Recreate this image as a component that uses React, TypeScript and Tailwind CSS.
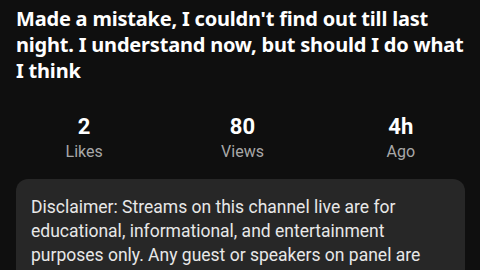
export default function App() {
  const stats = [
    { value: '2', label: 'Likes' },
    { value: '80', label: 'Views' },
    { value: '4h', label: 'Ago' },
  ];

  return (
    <div className="w-[480px] h-[270px] overflow-hidden bg-[#0f0f0f]">
      {/* Title */}
      <h1 className="pl-4 pr-3 pt-[6px] text-[20px] leading-[26px] font-bold text-white font-['Noto_Sans',sans-serif] tracking-[-0.2px]">
        Made a mistake, I couldn't find out till last night. I understand now, but should I do what I think
      </h1>

      {/* Stats */}
      <div className="grid grid-cols-3 pl-[5px] mt-[30px] font-['Roboto',sans-serif]">
        {stats.map((s) => (
          <div key={s.label} className="flex flex-col items-center">
            <span className="text-[22px] leading-[26px] font-bold text-white">{s.value}</span>
            <span className="text-[16px] leading-[24px] text-[#a8a8a8]">{s.label}</span>
          </div>
        ))}
      </div>

      {/* Disclaimer */}
      <div className="ml-4 mr-[15px] mt-[15px] rounded-xl bg-[#272727] pl-[15px] pr-5 pt-[16px] pb-4">
        <p className="text-[17.5px] leading-[24px] text-[#e8e8e8] font-['Roboto',sans-serif]">
          Disclaimer: Streams on this channel live are for educational, informational, and entertainment purposes only. Any guest or speakers on panel are members of the public and their views do not reflect our own.
        </p>
      </div>
    </div>
  );
}
